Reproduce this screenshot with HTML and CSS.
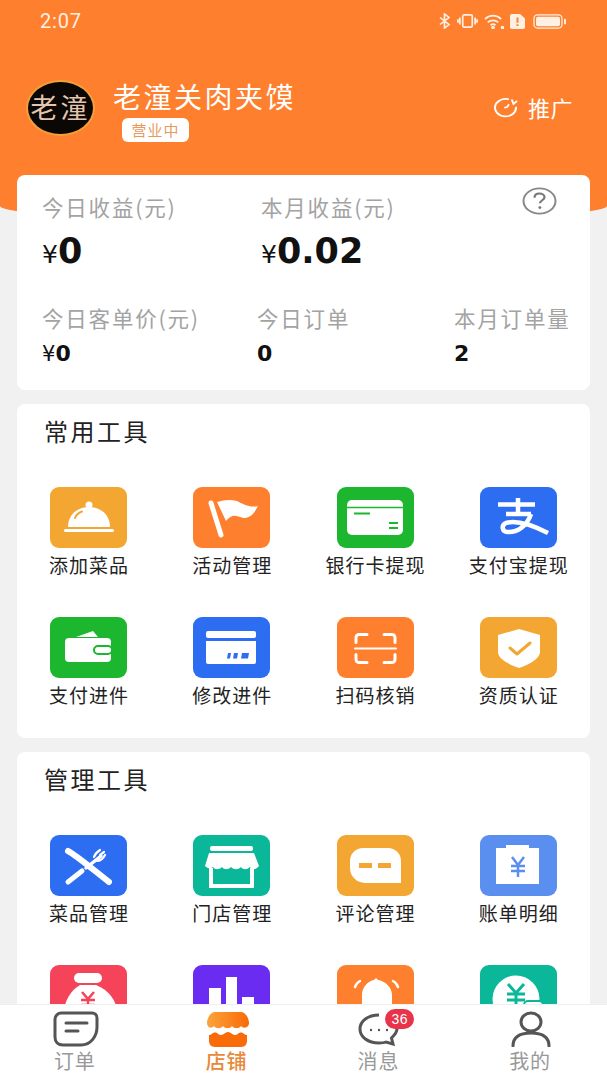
FILE: index.html
```html
<!DOCTYPE html>
<html lang="zh-CN">
<head>
    <meta charset="UTF-8">
    <meta name="viewport" content="width=device-width, initial-scale=1.0">
    <title>店铺</title>
    <link rel="stylesheet" href="styles.css">
</head>
<body>
    <header class="top-bg">
        <div class="status-bar">
            <span class="status-time">2:07</span>
            <div class="status-icons">
                <svg width="12" height="16" viewBox="0 0 12 18" preserveAspectRatio="none" fill="none" stroke="#fff0e4" stroke-width="1.700"><path d="M1 5l9 8-4.500 4V1l4.500 4-9 8"/></svg>
                <svg width="21" height="14" viewBox="0 0 22 16" preserveAspectRatio="none" fill="none" stroke="#fff0e4" stroke-width="1.800"><rect x="6" y="1" width="10" height="14" rx="1.500"/><path d="M3 4v8M1 6v4M19 4v8M21 6v4"/></svg>
                <svg width="20" height="15" viewBox="0 0 21 16" preserveAspectRatio="none" fill="none" stroke="#fff0e4" stroke-width="1.900"><path d="M1 5.500c5-5 12-5 17 0M4 9c3-3 8-3 11 0M7 12c1.500-1.400 3.500-1.400 5 0"/><circle cx="9.500" cy="14.500" r="1" fill="#fff0e4"/><circle cx="19.500" cy="14.500" r="1" fill="#fff0e4"/></svg>
                <svg width="15" height="15" viewBox="0 0 15 17" preserveAspectRatio="none"><path d="M2 0h8l5 5v10a2 2 0 0 1-2 2H2a2 2 0 0 1-2-2V2a2 2 0 0 1 2-2z" fill="#fff0e4"/><path d="M6.500 4h2v6h-2zM6.500 11.500h2v2h-2z" fill="#fe7f2d"/></svg>
                <svg class="status-battery" width="33" height="15" viewBox="0 0 33 16" preserveAspectRatio="none"><rect x="1" y="1" width="28" height="14" rx="3.500" fill="none" stroke="#fff0e4" stroke-width="1.300"/><rect x="3" y="3" width="24" height="10" rx="2" fill="#fff0e4"/><rect x="31" y="5" width="2" height="6" rx="1" fill="#fff0e4"/></svg>
            </div>
        </div>

        <div class="shop-row">
            <div class="avatar">老潼</div>
            <div class="shop-info">
                <div class="shop-name">老潼关肉夹馍</div>
                <span class="shop-state">营业中</span>
            </div>
            <div class="promote">
                <svg width="25" height="21" viewBox="0 0 25 24" preserveAspectRatio="none" fill="none" stroke="#fff" stroke-width="2" stroke-linecap="round"><path d="M15 2.500A10.500 10 0 1 0 23 12"/><path d="M19 3.500l1.500 4.500 3-3"/><path d="M12 12c1.500 0 3-1 3.500-3"/></svg>
                <span>推广</span>
            </div>
        </div>
    </header>

    <main class="content">
        <section class="card stats-card">
            <svg class="help-icon" width="35" height="28" viewBox="0 0 35 30" preserveAspectRatio="none"><ellipse cx="17.500" cy="15" rx="16" ry="13.500" fill="none" stroke="#888" stroke-width="2"/><path d="M12.500 11.500c0-3 2.300-4.500 5-4.500s5 1.600 5 4c0 3.200-4.600 3.200-4.600 6.500" fill="none" stroke="#777" stroke-width="2.200"/><circle cx="17.900" cy="22" r="1.500" fill="#777"/></svg>
            <div class="stats-top">
                <div class="stat stat-today">
                    <div class="stat-label">今日收益(元)</div>
                    <div class="stat-big"><small>¥</small>0</div>
                </div>
                <div class="stat">
                    <div class="stat-label">本月收益(元)</div>
                    <div class="stat-big"><small>¥</small>0.02</div>
                </div>
            </div>
            <div class="stats-bottom">
                <div class="stat">
                    <div class="stat-label">今日客单价(元)</div>
                    <div class="stat-small"><small>¥</small>0</div>
                </div>
                <div class="stat">
                    <div class="stat-label">今日订单</div>
                    <div class="stat-small">0</div>
                </div>
                <div class="stat">
                    <div class="stat-label">本月订单量</div>
                    <div class="stat-small">2</div>
                </div>
            </div>
        </section>

        <section class="card tools-card">
            <h2 class="tools-title">常用工具</h2>
            <div class="tools-grid">
                <div class="tool">
                    <div class="tile tile-yellow">
                        <svg viewBox="0 0 77 61"><circle cx="39" cy="18" r="3.500" fill="#fff"/><path d="M18 40c0-12 9-20 21-20s21 8 21 20z" fill="#fff"/><rect x="14" y="42" width="50" height="3" rx="1.500" fill="#fff"/><path d="M25 31c1-3 3-5 7-6.500" fill="none" stroke="#f3a632" stroke-width="2" stroke-linecap="round"/></svg>
                    </div>
                    <span>添加菜品</span>
                </div>
                <div class="tool">
                    <div class="tile tile-orange">
                        <svg viewBox="0 0 77 61"><path d="M18 16l10 32" stroke="#fff" stroke-width="5" stroke-linecap="round"/><path d="M24 15c7-2 13-3 20-1 6 3 13 7 21 5-3 6-7 12-15 12-8-3-11-4-17 3z" fill="#fff"/></svg>
                    </div>
                    <span>活动管理</span>
                </div>
                <div class="tool">
                    <div class="tile tile-green">
                        <svg viewBox="0 0 77 61"><rect x="10" y="13" width="56" height="35" rx="5" fill="#fff"/><path d="M10 20.500h56" stroke="#1db62f" stroke-width="1.500"/><path d="M17 26.500h16M52 36h9M52 41h9" stroke="#1db62f" stroke-width="2"/></svg>
                    </div>
                    <span>银行卡提现</span>
                </div>
                <div class="tool">
                    <div class="tile tile-blue">
                        <svg viewBox="0 0 77 61" fill="none" stroke="#fff" stroke-width="4.500"><path d="M18 17.500h37M38 11v14M26 27h25"/><path d="M51 27c-4 12-14 19-24 18-5-.5-6-7-1-9 10-3 26 2 42 10" stroke-linejoin="round"/></svg>
                    </div>
                    <span>支付宝提现</span>
                </div>
                <div class="tool">
                    <div class="tile tile-green">
                        <svg viewBox="0 0 77 61"><path d="M26 20l17-6 5 6z" fill="#fff"/><rect x="15" y="21" width="46" height="24" rx="4" fill="#fff"/><rect x="44" y="29" width="18" height="8" rx="4" fill="#fff" stroke="#1db62f" stroke-width="2"/></svg>
                    </div>
                    <span>支付进件</span>
                </div>
                <div class="tool">
                    <div class="tile tile-blue">
                        <svg viewBox="0 0 77 61"><rect x="13" y="14" width="50" height="7" rx="2" fill="#fff"/><path d="M13 24h50v21a2 2 0 0 1-2 2H15a2 2 0 0 1-2-2z" fill="#fff"/><path d="M35 36h3l-1 5.500h-3zM41 36h4l-1 5.500h-4zM49 36h7l-1 5.500h-7z" fill="#2c6df2"/></svg>
                    </div>
                    <span>修改进件</span>
                </div>
                <div class="tool">
                    <div class="tile tile-orange">
                        <svg viewBox="0 0 77 61" fill="none" stroke="#fff" stroke-width="3" stroke-linecap="round"><path d="M30 17.500h-8a3 3 0 0 0-3 3v5M47 17.500h8a3 3 0 0 1 3 3v5M30 45.500h-8a3 3 0 0 1-3-3v-5M47 45.500h8a3 3 0 0 0 3-3v-5"/><path d="M18 31.500h41" stroke-width="2"/></svg>
                    </div>
                    <span>扫码核销</span>
                </div>
                <div class="tool">
                    <div class="tile tile-yellow">
                        <svg viewBox="0 0 77 61"><path d="M39 12l21 6v17c0 7-12 13-21 16-9-3-21-9-21-16V18z" fill="#fff"/><path d="M30 31l7 6 13-11" fill="none" stroke="#f3a632" stroke-width="3" stroke-linecap="round" stroke-linejoin="round"/></svg>
                    </div>
                    <span>资质认证</span>
                </div>
            </div>
        </section>

        <section class="card tools-card">
            <h2 class="tools-title">管理工具</h2>
            <div class="tools-grid">
                <div class="tool">
                    <div class="tile tile-blue">
                        <svg viewBox="0 0 77 61" fill="none" stroke="#fff" stroke-linecap="round"><path d="M18 16c8 4 28 21 41 31" stroke-width="6"/><path d="M18 47l14-11" stroke-width="5"/><path d="M36 33l15-12" stroke-width="3.500"/><path d="M44 22c1-3 3-5 6-7M47 26c3 0 6-2 8-6M50 20l4-3" stroke-width="2.200"/></svg>
                    </div>
                    <span>菜品管理</span>
                </div>
                <div class="tool">
                    <div class="tile tile-teal">
                        <svg viewBox="0 0 77 61"><rect x="17" y="11" width="43" height="5" rx="2" fill="#fff"/><path d="M16 18h45l5 13c-3 4-7 4-9 1-3 3-7 3-9 0-3 3-7 3-10 0-3 3-7 3-9 0-3 3-7 3-9 0-2 2-5 2-8-1z" fill="#fff"/><path d="M18 33v18h41V33" fill="none" stroke="#fff" stroke-width="4"/></svg>
                    </div>
                    <span>门店管理</span>
                </div>
                <div class="tool">
                    <div class="tile tile-yellow">
                        <svg viewBox="0 0 77 61"><path d="M26 13h25a13 13 0 0 1 13 13v22H28a15 15 0 0 1-15-15v-7a13 13 0 0 1 13-13z" fill="#fff"/><path d="M22 28h13v5H22zM41 28h13v5H41z" fill="#f3a632"/></svg>
                    </div>
                    <span>评论管理</span>
                </div>
                <div class="tool">
                    <div class="tile tile-sky">
                        <svg viewBox="0 0 77 61"><path d="M16 13h10v-3h23v3h10v36H16z" fill="#fff"/><path d="M32 22l6 8 6-8M38 30v12M31 31h14M31 36h14" fill="none" stroke="#5a8ff0" stroke-width="2.500"/></svg>
                    </div>
                    <span>账单明细</span>
                </div>
                <div class="tool">
                    <div class="tile tile-red">
                        <svg viewBox="0 0 77 61"><rect x="24" y="8" width="28" height="10" rx="5" fill="#fff"/><path d="M30 20h16c13 5 21 16 21 28v13H14V48c0-12 7-23 16-28z" fill="#fff"/><path d="M32 27l6 7 6-7M38 34v10M31 35h14M31 40h14" fill="none" stroke="#f5435a" stroke-width="2.500"/></svg>
                    </div>
                </div>
                <div class="tool">
                    <div class="tile tile-purple">
                        <svg viewBox="0 0 77 61"><path d="M16 23h12v38H16zM33 12h11v49H33zM49 32h12v29H49z" fill="#fff"/></svg>
                    </div>
                </div>
                <div class="tool">
                    <div class="tile tile-orange">
                        <svg viewBox="0 0 77 61"><path d="M25 61V30c0-8 6-14 12-15l2-2 2 2c7 1 14 7 14 15v31z" fill="#fff"/><path d="M18 22c1-3 3-5 5-6M61 22c-1-3-3-5-5-6" fill="none" stroke="#fff" stroke-width="2.500" stroke-linecap="round"/></svg>
                    </div>
                </div>
                <div class="tool">
                    <div class="tile tile-teal">
                        <svg viewBox="0 0 77 61"><circle cx="36" cy="34" r="23.500" fill="#fff"/><path d="M28 19l8 9 8-9M36 28v14M27 29h18M27 35h18" fill="none" stroke="#0ab799" stroke-width="3"/><rect x="44" y="36" width="19" height="20" rx="4" fill="#fff" stroke="#0ab799" stroke-width="2"/></svg>
                    </div>
                </div>
            </div>
        </section>
    </main>

    <nav class="tab-bar">
        <div class="tab">
            <svg width="46" height="36" viewBox="0 0 46 36" fill="none" stroke="#555" stroke-width="3"><path d="M8 2h31c3 0 5 2 5 5v9c0 9-6 18-16 18H10c-5 0-8-3-8-8V8c0-3 3-6 6-6z"/><path d="M13 12h21M13 20h12" stroke-linecap="round"/></svg>
            <span>订单</span>
        </div>
        <div class="tab tab-active">
            <svg width="44" height="36" viewBox="0 0 44 36"><defs><linearGradient id="shopTop" x1="0" x2="1" y1="0" y2="0"><stop offset="0" stop-color="#fda33a"/><stop offset="1" stop-color="#f96a08"/></linearGradient></defs><path d="M9 1h26c5 0 8 7 8 11 0 5-6 6-8 3-2 3-7 3-9 0-2 3-7 3-9 0-2 3-7 3-9 0-2 3-7 2-7-3 0-4 3-11 8-11z" fill="url(#shopTop)"/><path d="M3 24c3 0 3-2.500 6-2.500s3 2.500 6 2.500 4-3 7-3 4 3 7 3 3-2.500 6-2.500 3 2.500 6 2.500v6c0 3-2 6-6 6H9c-4 0-6-3-6-6z" fill="#f96a08"/></svg>
            <span>店铺</span>
        </div>
        <div class="tab">
            <div class="tab-msg">
                <svg width="42" height="33" viewBox="0 0 42 33" fill="none" stroke="#555" stroke-width="3"><path d="M21 2C10 2 2 8 2 16s8 14 19 14c3 0 5 0 7-1l7 2-1.500-6c3-3 5.500-6 5.500-9"/><circle cx="13" cy="17" r="1.200" fill="#555" stroke="none"/><circle cx="21" cy="17" r="1.200" fill="#555" stroke="none"/><circle cx="29" cy="17" r="1.200" fill="#555" stroke="none"/></svg>
                <b class="tab-badge">36</b>
            </div>
            <span>消息</span>
        </div>
        <div class="tab">
            <svg width="40" height="36" viewBox="0 0 40 36" fill="none" stroke="#555" stroke-width="3"><ellipse cx="20" cy="11" rx="10" ry="9"/><path d="M2 35c0-9 7-13 18-13s18 4 18 13" stroke-linecap="round"/></svg>
            <span>我的</span>
        </div>
    </nav>
</body>
</html>
```

FILE: styles.css
```css
* {
    box-sizing: border-box;
}
html, body {
    height: 100%;
}
body {
    margin: 0;
    overflow: hidden;
    background-color: #f1f1f1;
    font-family: "Noto Sans CJK SC", "Noto Sans", sans-serif;
    color: #222;
}

.top-bg {
    height: 222px;
    background-color: #fe7f2d;
    border-radius: 0 0 50% 50% / 0 0 16px 16px;
    padding: 0 34px 0 26px;
}
.status-bar {
    display: flex;
    justify-content: space-between;
    align-items: center;
    height: 42px;
    padding: 0 7px 0 14px;
    color: #fff0e4;
}
.status-time {
    font-family: "Roboto", sans-serif;
    font-size: 20px;
    letter-spacing: 0.8px;
}
.status-icons {
    display: flex;
    align-items: center;
    gap: 6px;
}
.status-battery {
    margin-left: 2px;
}

.shop-row {
    display: flex;
    align-items: flex-start;
    margin-top: 38px;
    color: #fff;
}
.avatar {
    width: 69px;
    height: 56px;
    flex: none;
    border-radius: 50%;
    background-color: #0a0705;
    border: 2px solid #f3a03d;
    color: #e2c6ad;
    font-size: 27px;
    line-height: 50px;
    letter-spacing: 3px;
    text-align: center;
    white-space: nowrap;
}
.shop-info {
    flex: 1;
    margin-left: 18px;
}
.shop-name {
    font-size: 28px;
    line-height: 30px;
    margin-top: 1px;
    letter-spacing: 2.500px;
    white-space: nowrap;
}
.shop-state {
    display: block;
    margin: 7px 0 0 9px;
    width: 67px;
    height: 24px;
    border-radius: 6px;
    background-color: #fff;
    color: #e89a5e;
    font-size: 15px;
    line-height: 24px;
    letter-spacing: 1px;
    text-align: center;
}
.promote {
    display: flex;
    align-items: center;
    gap: 10px;
    margin-top: 13px;
    font-size: 22px;
    line-height: 28px;
    letter-spacing: 0.5px;
    white-space: nowrap;
}

.content {
    margin-top: -47px;
    padding: 0 17px;
    position: relative;
}
.card {
    background-color: #fff;
    border-radius: 8px;
    margin-bottom: 14px;
}

.stats-card {
    position: relative;
    height: 215px;
    padding: 18px 0 0 25px;
}
.help-icon {
    position: absolute;
    right: 33px;
    top: 12px;
}
.stats-top {
    display: flex;
}
.stat-today {
    width: 219px;
}
.stats-bottom {
    display: grid;
    grid-template-columns: 215px 197px 1fr;
    margin-top: 28px;
}
.stat-label {
    color: #a3a3a3;
    font-size: 21.500px;
    line-height: 28px;
    letter-spacing: 1.800px;
    white-space: nowrap;
}
.stat-big, .stat-small {
    font-family: "DejaVu Sans", sans-serif;
    font-weight: bold;
    color: #111;
}
.stat-big {
    font-size: 35px;
    line-height: 42px;
    margin-top: 9px;
}
.stat-big small {
    font-size: 25px;
    font-weight: normal;
}
.stat-small {
    font-size: 22px;
    line-height: 26px;
    margin-top: 9px;
}
.stat-small small {
    font-size: 21px;
    font-weight: normal;
}

.tools-card {
    height: 334px;
    padding-top: 12px;
}
.tools-title {
    margin: 0 0 0 27px;
    font-size: 24px;
    line-height: 30px;
    font-weight: normal;
    letter-spacing: 2.500px;
    color: #222;
}
.tools-grid {
    display: grid;
    grid-template-columns: repeat(4, 1fr);
    grid-auto-rows: 130px;
    margin-top: 41px;
}
.tool {
    display: flex;
    flex-direction: column;
    align-items: center;
    font-size: 19px;
    line-height: 24px;
    letter-spacing: 1px;
    color: #222;
    white-space: nowrap;
}
.tool span {
    margin-top: 5px;
    margin-right: -1px;
}
.tile {
    width: 77px;
    height: 61px;
    border-radius: 9px;
    overflow: hidden;
    flex: none;
}
.tile svg {
    display: block;
    width: 77px;
    height: 61px;
}
.tile-yellow { background-color: #f3a632; }
.tile-orange { background-color: #fe7f2d; }
.tile-green { background-color: #1db62f; }
.tile-blue { background-color: #2c6df2; }
.tile-teal { background-color: #0ab799; }
.tile-sky { background-color: #5a8ff0; }
.tile-red { background-color: #f5435a; }
.tile-purple { background-color: #6a2cf0; }

.tab-bar {
    position: fixed;
    left: 0;
    right: 0;
    bottom: 0;
    height: 76px;
    background-color: #fff;
    border-top: 1px solid #eee;
    display: grid;
    grid-template-columns: repeat(4, 1fr);
}
.tab {
    display: flex;
    flex-direction: column;
    align-items: center;
    padding-top: 6px;
    color: #999;
    font-size: 20px;
    line-height: 24px;
    letter-spacing: 1px;
}
.tab svg {
    display: block;
    flex: none;
}
.tab > span {
    margin-top: 2px;
    margin-right: 2px;
}
.tab-active {
    color: #e8893a;
    font-weight: 500;
}
.tab-msg {
    position: relative;
    width: 42px;
    height: 36px;
    padding-top: 2px;
}
.tab-badge {
    position: absolute;
    left: 27px;
    top: -2px;
    width: 29px;
    height: 20px;
    border-radius: 10px;
    background-color: #e8344a;
    color: #fff;
    font-family: "Liberation Sans", sans-serif;
    font-size: 14px;
    font-weight: normal;
    line-height: 20px;
    letter-spacing: 0.5px;
    text-align: center;
}
```
